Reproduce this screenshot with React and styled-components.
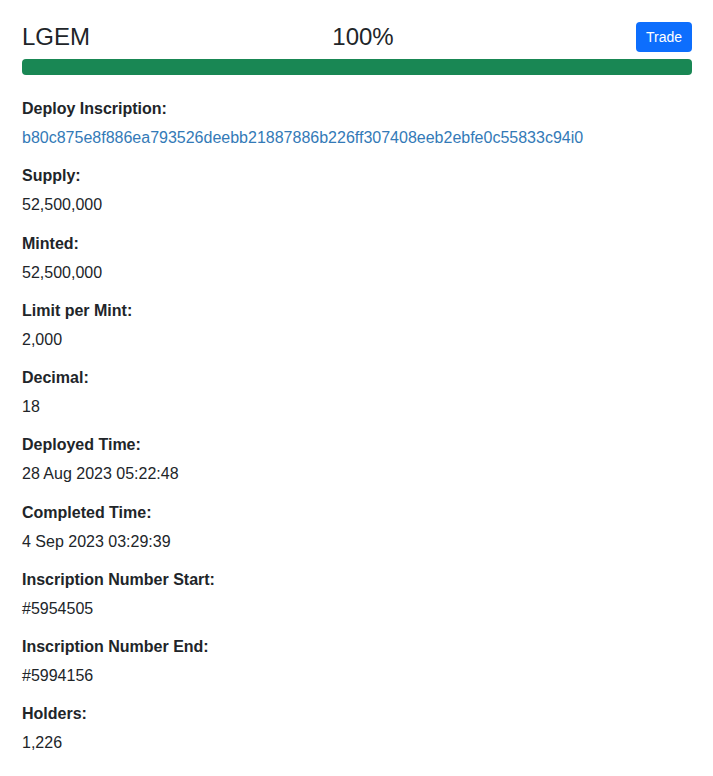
import React from "react"
import styled, { createGlobalStyle } from "styled-components"

const GlobalStyle = createGlobalStyle`
  * { box-sizing: border-box; }
  body {
    margin: 0;
    background: #ffffff;
    font-family: "Liberation Sans", Arial, sans-serif;
    color: #212529;
  }
`

const fields = [
  { label: "Deploy Inscription", value: "b80c875e8f886ea793526deebb21887886b226ff307408eeb2ebfe0c55833c94i0", link: true },
  { label: "Supply", value: "52,500,000" },
  { label: "Minted", value: "52,500,000" },
  { label: "Limit per Mint", value: "2,000" },
  { label: "Decimal", value: "18" },
  { label: "Deployed Time", value: "28 Aug 2023 05:22:48" },
  { label: "Completed Time", value: "4 Sep 2023 03:29:39" },
  { label: "Inscription Number Start", value: "#5954505" },
  { label: "Inscription Number End", value: "#5994156" },
  { label: "Holders", value: "1,226" },
]

export default function App() {
  const progress = 100

  return (
    <>
      <GlobalStyle />
      <Container>
        <Header>
          <Ticker>LGEM</Ticker>
          <Percent>{progress}%</Percent>
          <TradeButton>Trade</TradeButton>
        </Header>
        <Progress>
          <ProgressFill style={{ width: `${progress}%` }} />
        </Progress>
        <Fields>
          {fields.map((f) => (
            <Field key={f.label}>
              <Label>{f.label}:</Label>
              {f.link ? <ValueLink href="#">{f.value}</ValueLink> : <Value>{f.value}</Value>}
            </Field>
          ))}
        </Fields>
      </Container>
    </>
  )
}

const Container = styled.div`
  padding: 22px 21px 20px 22px;
`

const Header = styled.div`
  display: flex;
  justify-content: space-between;
  align-items: center;
  height: 30px;
`

const Ticker = styled.span`
  font-size: 24px;
  line-height: 30px;
`

const Percent = styled.span`
  font-size: 24px;
  line-height: 30px;
`

const TradeButton = styled.button`
  height: 30px;
  padding: 0 10px;
  border: none;
  border-radius: 4px;
  background: #0d6efd;
  color: #ffffff;
  font-family: "Liberation Sans", Arial, sans-serif;
  font-size: 14px;
  cursor: pointer;
`

const Progress = styled.div`
  margin-top: 7px;
  height: 16px;
  border-radius: 4px;
  background: #e9ecef;
  overflow: hidden;
`

const ProgressFill = styled.div`
  height: 100%;
  background: #198754;
`

const Fields = styled.div`
  display: flex;
  flex-direction: column;
  gap: 14.25px;
  margin-top: 22px;
`

const Field = styled.div`
  display: flex;
  flex-direction: column;
  gap: 5px;
`

const Label = styled.div`
  font-size: 16px;
  font-weight: 700;
  line-height: 24px;
`

const Value = styled.div`
  font-size: 16px;
  line-height: 24px;
`

const ValueLink = styled.a`
  font-size: 16px;
  line-height: 24px;
  color: #337ab7;
  text-decoration: none;
`
